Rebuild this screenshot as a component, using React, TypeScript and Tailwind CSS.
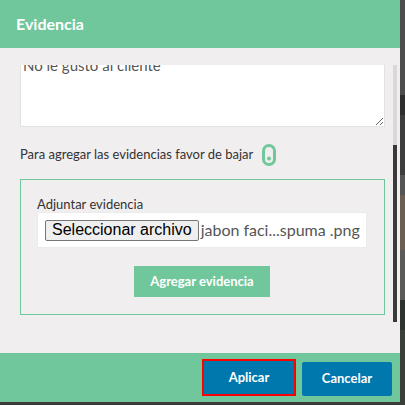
export default function App() {
  return (
    <div className="flex h-[405px] w-[405px] overflow-hidden bg-[#3b3b3b] font-['Lato',sans-serif]">
      <div className="flex h-[402px] w-[400px] shrink-0 flex-col">
        {/* header */}
        <div className="flex h-[48px] shrink-0 items-center bg-[#6fc79b] px-4 shadow-[0_1px_1px_rgba(0,0,0,0.08)]">
          <h2 className="text-[16px] font-bold text-white">Evidencia</h2>
        </div>

        {/* body */}
        <div className="flex h-[305px] shrink-0 bg-[#f0eeee] pl-5 pt-[17px] pb-[31px]">
          <div className="h-[257px] w-[365px] overflow-hidden">
            <div className="-mt-[13px] flex flex-col pb-2">
              <textarea
                readOnly
                defaultValue="No le gusto al cliente"
                className="h-[75px] w-full border border-[#e2e2e2] bg-white p-[2px] text-[15px] leading-5 text-[#555] outline-none"
              />
              <div className="mt-[17px] flex h-[22px] items-center gap-[9px]">
                <span className="text-[13px] text-[#333]">Para agregar las evidencias favor de bajar</span>
                <svg width="14" height="22" viewBox="0 0 14 22" fill="none">
                  <rect x="1.5" y="1.5" width="11" height="19" rx="5.5" stroke="#6fc79b" strokeWidth="3" />
                  <circle cx="7" cy="14.5" r="2" fill="#6fc79b" />
                </svg>
              </div>
              <div className="mt-[13px] flex h-[136px] flex-col border border-[#6fc79b] pl-4 pr-[17px] pt-4">
                <label className="text-[13px] leading-4 text-[#333]">Adjuntar evidencia</label>
                <div className="flex h-[36px] items-center gap-[2px] border border-[#ebebeb] bg-white pl-[7px]">
                  <span className="flex h-[21px] items-center rounded-[2px] border border-[#767676] bg-[#efefef] px-[6px] font-['Liberation_Sans',sans-serif] text-[16px] text-black">
                    Seleccionar archivo
                  </span>
                  <span className="text-[16px] text-[#555]">jabon faci...spuma .png</span>
                </div>
                <button className="mx-auto mt-[18px] h-[31px] w-[136px] bg-[#6fc79b] text-[13px] font-bold text-white">
                  Agregar evidencia
                </button>
              </div>
            </div>
          </div>
          <div className="ml-2 flex h-[257px] w-[4px] flex-col">
            <div className="h-[80px] bg-[#d9d9d9]" />
            <div className="flex-1 bg-[#3a3a3a]" />
          </div>
        </div>

        {/* footer */}
        <div className="flex h-[49px] shrink-0 items-end justify-end gap-[6px] bg-[#6fc79b] pb-[6px] pr-2">
          <button className="h-[37px] w-[94px] border-2 border-[#ff0000] bg-[#0077ad] text-[13px] font-bold text-white">
            Aplicar
          </button>
          <button className="h-[34px] w-[90px] rounded-[2px] bg-[#0077ad] text-[13px] font-bold text-white">
            Cancelar
          </button>
        </div>
      </div>

      {/* page behind the modal */}
      <div className="flex w-[5px] flex-col">
        <div className="h-[95px] bg-[#4d4d4d]" />
        <div className="h-[20px] bg-[#2e2e2e]" />
        <div className="h-[60px] bg-[#3d3d3d]" />
        <div className="h-[20px] bg-[#555]" />
        <div className="h-[55px] bg-[#6a5f52]" />
        <div className="h-[50px] bg-[#5a5a58]" />
        <div className="h-[30px] bg-[#2f332f]" />
        <div className="flex-1 bg-[#3a3f3a]" />
      </div>
    </div>
  )
}
